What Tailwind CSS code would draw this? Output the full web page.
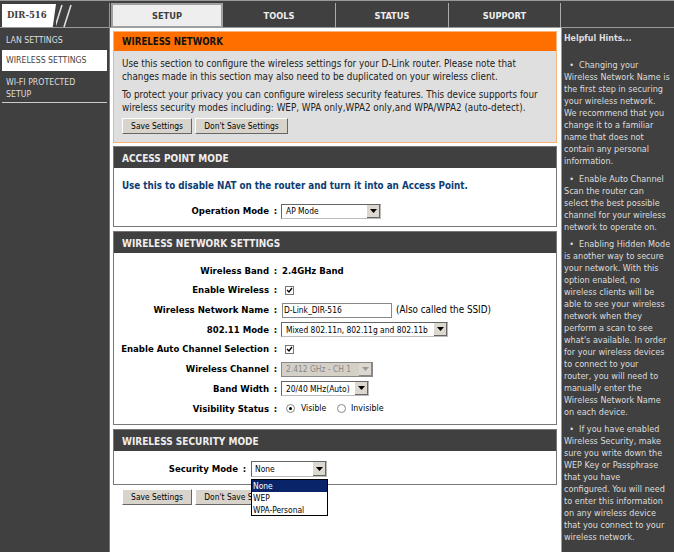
<!DOCTYPE html>
<html lang="en">
<head>
    <meta charset="UTF-8">
    <title>DIR-516</title>
    <script src="https://cdn.jsdelivr.net/npm/@tailwindcss/browser@4"></script>
</head>
<body class="w-[674px] h-[552px] overflow-hidden bg-white font-['DejaVu_Sans_Condensed','Noto_Sans',sans-serif] text-[9.8px] text-black">
    <!-- top bar -->
    <div class="flex h-[28px] bg-[#404040] pt-[2px] border-t border-b border-[#999]">
        <div class="flex items-center w-[110px] h-[25px] border-r border-[#999]">
            <div class="flex items-center h-[23px] w-[54px] ml-[2px] pl-[5px] bg-white [clip-path:polygon(0_0,100%_0,94%_100%,0_100%)] font-['DejaVu_Serif',serif] font-bold text-[#404040] text-[8.5px]">DIR-516</div>
            <svg class="w-[24px] h-[24px]" viewBox="0 0 24 24"><path d="M-1 23 L6 1 M8 23 L15 1" stroke="#ddd" stroke-width="1.6" fill="none"/></svg>
        </div>
        <div class="flex items-center justify-center w-[112px] h-[25px] ml-[1px] bg-[#eee] border-2 border-[#a0a0a0] font-bold text-[#404040] text-[9.2px]">SETUP</div>
        <div class="flex items-center justify-center w-[113px] h-[25px] border-r border-[#aaa] font-bold text-[#eee] text-[9.2px]">TOOLS</div>
        <div class="flex items-center justify-center w-[113px] h-[25px] border-r border-[#aaa] font-bold text-[#eee] text-[9.2px]">STATUS</div>
        <div class="flex items-center justify-center w-[112px] h-[25px] border-r border-[#aaa] font-bold text-[#eee] text-[9.2px]">SUPPORT</div>
    </div>

    <div class="flex h-[524px]">
        <!-- left menu -->
        <div class="w-[110px] bg-[#404040] px-[2px] border-r border-[#777] text-[#ddd] text-[8.7px] shrink-0">
            <div class="h-[22px] pl-[4px] pt-[4px] flex items-center">LAN SETTINGS</div>
            <div class="h-[21px] pl-[4px] flex items-center bg-white text-[#444]">WIRELESS SETTINGS</div>
            <div class="h-[32px] pl-[4px] pt-[5px] leading-[12px] border-b border-[#ccc]">WI-FI PROTECTED<br>SETUP</div>
        </div>

        <!-- main column -->
        <div class="relative w-[451px] shrink-0 pl-[3px] pr-[3px] pt-[3px]">
            <div class="h-[112px] w-[444px] bg-[#dfdfdf] border border-[#f5b57a]">
                <div class="h-[19px] bg-[#ff6f00] pl-[8px] pt-[2px] flex items-center font-bold text-[#111] text-[9.6px]">WIRELESS NETWORK</div>
                <p class="pl-[8px] pt-[6px] leading-[13px] text-[#222]">Use this section to configure the wireless settings for your D-Link router. Please note that<br>changes made in this section may also need to be duplicated on your wireless client.</p>
                <p class="pl-[8px] pt-[5px] leading-[13px] text-[#222]">To protect your privacy you can configure wireless security features. This device supports four<br>wireless security modes including: WEP, WPA only,WPA2 only,and WPA/WPA2 (auto-detect).</p>
                <div class="flex gap-[3px] pl-[8px] pt-[4px] text-[8.4px]">
                    <div class="flex items-center justify-center w-[70px] h-[16px] bg-[#d8d4cc] border border-t-white border-l-white border-r-[#666] border-b-[#666]">Save Settings</div>
                    <div class="flex items-center justify-center w-[93px] h-[16px] bg-[#d8d4cc] border border-t-white border-l-white border-r-[#666] border-b-[#666]">Don't Save Settings</div>
                </div>
            </div>

            <div class="h-[81px] w-[444px] mt-[3px] border border-[#777]">
                <div class="h-[21px] bg-[#404040] pl-[8px] pt-[1px] flex items-center font-bold text-[#eee] text-[10px]">ACCESS POINT MODE</div>
                <p class="pl-[8px] pt-[11px] font-bold text-[#0d3c74] text-[9.75px] leading-[14px]">Use this to disable NAT on the router and turn it into an Access Point.</p>
                <div class="flex items-center h-[20px] mt-[8px] font-bold text-[9.5px]">
                    <div class="w-[155px] text-right">Operation Mode</div>
                    <div class="w-[9px] text-center ml-[2px]">:</div>
                    <div class="flex items-center justify-between w-[100px] h-[15px] ml-[1px] bg-white border border-[#666] border-r-[#bbb] border-b-[#bbb] pl-[4px] font-normal text-[8.4px]">AP Mode<span class="flex items-center justify-center w-[13px] h-[13px] bg-[#dcd8d0] border-r border-b border-[#666]"><svg class="w-[7px] h-[4px]" viewBox="0 0 7 4"><path d="M0 0H7L3.5 4Z"/></svg></span></div>
                </div>
            </div>

            <div class="h-[194px] w-[444px] mt-[4px] border border-[#777]">
                <div class="h-[21px] bg-[#404040] pl-[8px] pt-[1px] flex items-center font-bold text-[#eee] text-[10px]">WIRELESS NETWORK SETTINGS</div>
                <div class="pt-[8px] font-bold text-[9.5px] whitespace-nowrap">
                    <div class="flex items-center h-[19.7px]"><div class="w-[155px] text-right">Wireless Band</div><div class="w-[9px] text-center ml-[2px]">:</div><div class="ml-[2px]">2.4GHz Band</div></div>
                    <div class="flex items-center h-[19.7px]"><div class="w-[155px] text-right">Enable Wireless</div><div class="w-[9px] text-center ml-[2px]">:</div><div class="flex items-center justify-center w-[9px] h-[9px] ml-[5px] border border-[#777] bg-white"><svg class="w-[7px] h-[7px]" viewBox="0 0 7 7"><path d="M1 3L3 5L6 1" stroke="#000" stroke-width="1.3" fill="none"/></svg></div></div>
                    <div class="flex items-center h-[19.7px]"><div class="w-[155px] text-right">Wireless Network Name</div><div class="w-[9px] text-center ml-[2px]">:</div><div class="flex items-center w-[110px] h-[15px] ml-[2px] bg-white border border-[#888] pl-[1px] font-normal text-[8.4px]">D-Link_DIR-516</div><div class="ml-[4px] font-normal text-[9.8px]">(Also called the SSID)</div></div>
                    <div class="flex items-center h-[19.7px]"><div class="w-[155px] text-right">802.11 Mode</div><div class="w-[9px] text-center ml-[2px]">:</div><div class="flex items-center justify-between w-[167px] h-[15px] ml-[1px] bg-white border border-[#666] border-r-[#bbb] border-b-[#bbb] pl-[4px] font-normal text-[8.4px]">Mixed 802.11n, 802.11g and 802.11b<span class="flex items-center justify-center w-[13px] h-[13px] bg-[#dcd8d0] border-r border-b border-[#666]"><svg class="w-[7px] h-[4px]" viewBox="0 0 7 4"><path d="M0 0H7L3.5 4Z"/></svg></span></div></div>
                    <div class="flex items-center h-[19.7px]"><div class="w-[155px] text-right">Enable Auto Channel Selection</div><div class="w-[9px] text-center ml-[2px]">:</div><div class="flex items-center justify-center w-[9px] h-[9px] ml-[5px] border border-[#777] bg-white"><svg class="w-[7px] h-[7px]" viewBox="0 0 7 7"><path d="M1 3L3 5L6 1" stroke="#000" stroke-width="1.3" fill="none"/></svg></div></div>
                    <div class="flex items-center h-[19.7px]"><div class="w-[155px] text-right">Wireless Channel</div><div class="w-[9px] text-center ml-[2px]">:</div><div class="flex items-center justify-between w-[92px] h-[15px] ml-[1px] bg-[#d4d0c8] border border-[#888] pl-[4px] font-normal text-[8.4px] text-[#888]">2.412 GHz - CH 1<span class="flex items-center justify-center w-[13px] h-[13px] bg-[#dcd8d0] border-r border-b border-[#888]"><svg class="w-[7px] h-[4px]" viewBox="0 0 7 4"><path d="M0 0H7L3.5 4Z" fill="#999"/></svg></span></div></div>
                    <div class="flex items-center h-[19.7px]"><div class="w-[155px] text-right">Band Width</div><div class="w-[9px] text-center ml-[2px]">:</div><div class="flex items-center justify-between w-[88px] h-[15px] ml-[1px] bg-white border border-[#666] border-r-[#bbb] border-b-[#bbb] pl-[4px] font-normal text-[8.4px]">20/40 MHz(Auto)<span class="flex items-center justify-center w-[13px] h-[13px] bg-[#dcd8d0] border-r border-b border-[#666]"><svg class="w-[7px] h-[4px]" viewBox="0 0 7 4"><path d="M0 0H7L3.5 4Z"/></svg></span></div></div>
                    <div class="flex items-center h-[19.7px]"><div class="w-[155px] text-right">Visibility Status</div><div class="w-[9px] text-center ml-[2px]">:</div><div class="flex items-center justify-center w-[9px] h-[9px] ml-[6px] rounded-full border border-[#888]"><div class="w-[3px] h-[3px] rounded-full bg-black"></div></div><div class="ml-[6px] w-[26px] font-normal text-[8.6px]">Visible</div><div class="w-[9px] h-[9px] ml-[10px] rounded-full border border-[#888]"></div><div class="ml-[5px] font-normal text-[8.8px]">Invisible</div></div>
                </div>
            </div>

            <div class="h-[56px] w-[444px] mt-[4px] border border-[#777]">
                <div class="h-[21px] bg-[#404040] pl-[8px] pt-[1px] flex items-center font-bold text-[#eee] text-[10px]">WIRELESS SECURITY MODE</div>
                <div class="flex items-center h-[20px] mt-[8px] font-bold text-[9.5px]">
                    <div class="w-[124px] text-right">Security Mode</div>
                    <div class="w-[9px] text-center ml-[2px]">:</div>
                    <div class="flex items-center justify-between w-[76px] h-[16px] ml-[2px] bg-white border border-[#666] border-r-[#bbb] border-b-[#bbb] pl-[3px] font-normal text-[8.4px]">None<span class="flex items-center justify-center w-[13px] h-[14px] bg-[#dcd8d0] border-r border-b border-[#666]"><svg class="w-[7px] h-[4px]" viewBox="0 0 7 4"><path d="M0 0H7L3.5 4Z"/></svg></span></div>
                </div>
            </div>

            <div class="flex gap-[3px] pl-[9px] pt-[4px] text-[8.4px]">
                <div class="flex items-center justify-center w-[70px] h-[16px] bg-[#d8d4cc] border border-t-white border-l-white border-r-[#666] border-b-[#666]">Save Settings</div>
                <div class="flex items-center justify-center w-[93px] h-[16px] bg-[#d8d4cc] border border-t-white border-l-white border-r-[#666] border-b-[#666]">Don't Save Settings</div>
            </div>

            <!-- open dropdown -->
            <div class="absolute left-[141px] top-[451px] w-[77px] h-[37px] bg-white border border-black text-[8.4px] leading-[12px]">
                <div class="bg-[#0a246a] text-white pl-[1px]">None</div>
                <div class="pl-[1px]">WEP</div>
                <div class="pl-[1px]">WPA-Personal</div>
            </div>
        </div>

        <!-- hints -->
        <div class="flex-1 bg-[#404040] border-l border-[#999] pl-[2px] text-[#ddd] text-[9px] leading-[12px] whitespace-nowrap">
            <p class="pt-[4px] font-bold text-[8.8px]">Helpful Hints...</p>
            <p class="pt-[15px]">&nbsp;&nbsp;&bull;&nbsp;&nbsp;Changing your<br>Wireless Network Name is<br>the first step in securing<br>your wireless network.<br>We recommend that you<br>change it to a familiar<br>name that does not<br>contain any personal<br>information.</p>
            <p class="pt-[6px]">&nbsp;&nbsp;&bull;&nbsp;&nbsp;Enable Auto Channel<br>Scan the router can<br>select the best possible<br>channel for your wireless<br>network to operate on.</p>
            <p class="pt-[5px]">&nbsp;&nbsp;&bull;&nbsp;&nbsp;Enabling Hidden Mode<br>is another way to secure<br>your network. With this<br>option enabled, no<br>wireless clients will be<br>able to see your wireless<br>network when they<br>perform a scan to see<br>what's available. In order<br>for your wireless devices<br>to connect to your<br>router, you will need to<br>manually enter the<br>Wireless Network Name<br>on each device.</p>
            <p class="pt-[5px]">&nbsp;&nbsp;&bull;&nbsp;&nbsp;If you have enabled<br>Wireless Security, make<br>sure you write down the<br>WEP Key or Passphrase<br>that you have<br>configured. You will need<br>to enter this information<br>on any wireless device<br>that you connect to your<br>wireless network.</p>
        </div>
    </div>
</body>
</html>
